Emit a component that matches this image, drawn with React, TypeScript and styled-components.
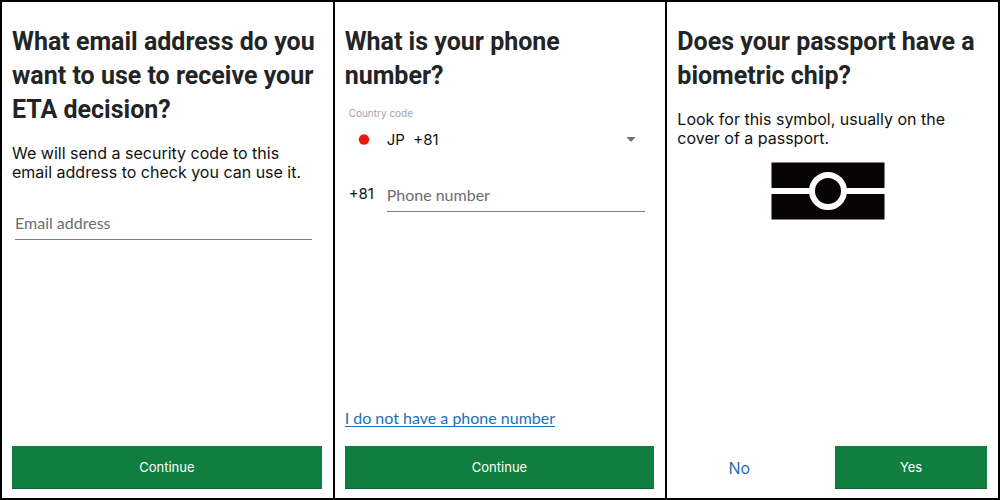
import React from 'react';
import styled, { createGlobalStyle } from 'styled-components';

const GlobalStyle = createGlobalStyle`
  *, *::before, *::after { box-sizing: border-box; }
  body {
    margin: 0;
    background: #fff;
    color: #111;
    font-family: Inter, "Liberation Sans", sans-serif;
    font-size: 16px;
  }
  button, input, select { font: inherit; color: inherit; }
`;

const Board = styled.main`
  display: grid;
  grid-template-columns: repeat(3, minmax(0, 1fr));
  gap: 2px;
  min-height: 100vh;
  padding: 2px;
  background: #000;
`;

const Panel = styled.form`
  display: flex;
  flex-direction: column;
  padding: 23px 11px 9px 10px;
  background: #fff;
`;

const Title = styled.h1`
  margin: 0;
  color: #222425;
  font-family: Roboto, "Liberation Sans", sans-serif;
  font-size: 25px;
  font-weight: 700;
  line-height: 34px;
`;

const Copy = styled.p`
  margin: 17px 0 0;
  line-height: 19px;
`;

const Body = styled.div`
  flex: 1;
`;

const TextInput = styled.input`
  display: block;
  width: 100%;
  height: 32px;
  padding: 0 0 2px;
  border: 0;
  border-bottom: 1px solid #7b7d7f;
  border-radius: 0;
  background: transparent;
  font-family: Lato, "Liberation Sans", sans-serif;
  line-height: 20px;

  &::placeholder {
    color: #6b6d6f;
    opacity: 1;
  }
`;

const EmailField = styled.div`
  margin: 26px 10px 0 3px;
`;

const PhoneFields = styled.div`
  display: grid;
  grid-template-columns: 38px minmax(0, 1fr);
  align-items: center;
  margin: 13px 9px 0 4px;
  font-size: 15px;
`;

const CodeLabel = styled.label`
  grid-column: 1 / -1;
  color: #a3a3a3;
  font-size: 10px;
  line-height: 14px;
`;

const Flag = styled.svg`
  display: block;
  width: 30px;
  height: 20px;
`;

const SelectWrap = styled.div`
  display: flex;
  align-items: center;
  height: 38px;
`;

const CodeSelect = styled.select`
  flex: 1;
  min-width: 0;
  height: 32px;
  margin-right: -19px;
  padding: 0 20px 0 0;
  border: 0;
  appearance: none;
  background: transparent;
`;

const Caret = styled.svg`
  flex: none;
  width: 10px;
  height: 5px;
  margin-right: 9px;
  pointer-events: none;
`;

const PhoneRow = styled.div`
  display: grid;
  grid-column: 1 / -1;
  grid-template-columns: subgrid;
  margin-top: 22px;
  line-height: 28px;

  input { font-size: 16px; }
`;

const ChipSymbol = styled.svg`
  display: block;
  width: 114px;
  height: 58px;
  margin: 14px auto 0;
`;

const SymbolRow = styled.div`
  padding-right: 8px;
`;

const BlueLink = styled.a`
  align-self: flex-start;
  margin-bottom: 19px;
  border-bottom: 1px solid #1d70b8;
  color: #1d70b8;
  font-family: Lato, "Liberation Sans", sans-serif;
  line-height: 17px;
  text-decoration: none;
`;

const Actions = styled.div`
  display: grid;
  grid-template-columns: repeat(2, minmax(0, 1fr));
  gap: 6px;
`;

const PrimaryButton = styled.button`
  height: 43px;
  border: 0;
  border-bottom: 1px solid #0a6832;
  background: #107e3e;
  color: #fff;
  font-size: 13px;
  cursor: pointer;
`;

const TextButton = styled.button`
  height: 43px;
  padding: 0 28px 0 0;
  border: 0;
  background: transparent;
  color: #1d70b8;
  cursor: pointer;
`;

function EmailPanel() {
  return (
    <Panel>
      <Body>
        <Title>What email address do you want to use to receive your ETA decision?</Title>
        <Copy>We will send a security code to this email address to check you can use it.</Copy>
        <EmailField>
          <TextInput type="email" aria-label="Email address" placeholder="Email address" />
        </EmailField>
      </Body>
      <PrimaryButton type="button">Continue</PrimaryButton>
    </Panel>
  );
}

function PhonePanel() {
  return (
    <Panel>
      <Body>
        <Title>What is your phone number?</Title>
        <PhoneFields>
          <CodeLabel htmlFor="country-code">Country code</CodeLabel>
          <Flag viewBox="0 0 30 20" aria-hidden="true">
            <rect width="30" height="20" fill="#fff" />
            <circle cx="15" cy="10.5" r="5.2" fill="#e81a10" />
          </Flag>
          <SelectWrap>
            <CodeSelect id="country-code" defaultValue="jp">
              <option value="jp">JP{'\u00a0 '}+81</option>
            </CodeSelect>
            <Caret viewBox="0 0 10 5" aria-hidden="true">
              <path d="M0.5 0h9L5 5z" fill="#6f6f6f" />
            </Caret>
          </SelectWrap>
          <PhoneRow>
            <span>+81</span>
            <TextInput type="tel" aria-label="Phone number" placeholder="Phone number" />
          </PhoneRow>
        </PhoneFields>
      </Body>
      <BlueLink href="#no-phone">I do not have a phone number</BlueLink>
      <PrimaryButton type="button">Continue</PrimaryButton>
    </Panel>
  );
}

function PassportPanel() {
  return (
    <Panel>
      <Body>
        <Title>Does your passport have a biometric chip?</Title>
        <Copy>Look for this symbol, usually on the cover of a passport.</Copy>
        <SymbolRow>
          <ChipSymbol viewBox="0 0 114 58" role="img" aria-label="Biometric passport symbol">
            <rect x="0.5" y="0.5" width="113" height="57" fill="#080304" />
            <path d="M0 29h114" stroke="#fff" strokeWidth="6" />
            <circle cx="57" cy="29" r="16" fill="#080304" stroke="#fff" strokeWidth="6" />
          </ChipSymbol>
        </SymbolRow>
      </Body>
      <Actions>
        <TextButton type="button">No</TextButton>
        <PrimaryButton type="button">Yes</PrimaryButton>
      </Actions>
    </Panel>
  );
}

export default function App() {
  return (
    <>
      <GlobalStyle />
      <Board>
        <EmailPanel />
        <PhonePanel />
        <PassportPanel />
      </Board>
    </>
  );
}
